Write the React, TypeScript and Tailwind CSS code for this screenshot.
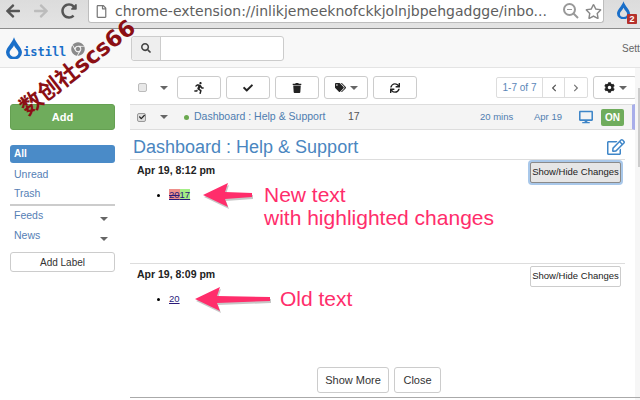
import { FaArrowLeft, FaArrowRight, FaRedoAlt, FaRegFile, FaRegStar, FaSearch, FaChrome, FaRunning, FaCheck, FaTrash, FaTags, FaSync, FaCog, FaChevronLeft, FaChevronRight, FaDesktop, FaRegEdit } from "react-icons/fa"

function Caret({ className = "" }: { className?: string }) {
  return <span className={`inline-block shrink-0 w-0 h-0 border-x-[4px] border-x-transparent border-t-[4px] border-t-[#666] ${className}`} />
}

function Drop({ size, color = "#1a6fc9" }: { size: number; color?: string }) {
  return (
    <svg width={size} height={size * 1.42} viewBox="0 0 20 28" className="shrink-0">
      <path d="M10 0 C8 7 0 13 0 19 A10 9 0 0 0 20 19 C20 13 12 7 10 0 Z M10 10 C11.5 14 15.5 16 15.5 19.5 A5.5 5 0 0 1 4.5 19.5 C4.5 16 8.5 14 10 10 Z" fill={color} fillRule="evenodd" />
    </svg>
  )
}

function ToolButton({ children }: { children: React.ReactNode }) {
  return (
    <button className="w-[44px] h-[23px] bg-white border border-[#ccc] rounded-[3px] flex items-center justify-center gap-1 text-[#222]">
      {children}
    </button>
  )
}

function Arrow({ width, className }: { width: number; className: string }) {
  return (
    <svg width={width} height="30" viewBox={`0 0 ${width} 30`} className={className}>
      <path d={`M1 13 L26 1 L23 10 L${width - 3} 11 L${width - 3} 15 L23 17 L26 25 Z`} fill="#000" opacity="0.22" transform="translate(1 2)" />
      <path d={`M1 13 L26 1 L23 10 L${width - 3} 11 L${width - 3} 15 L23 17 L26 25 Z`} fill="#ff2d6b" />
    </svg>
  )
}

function ChangesButton({ active }: { active?: boolean }) {
  return (
    <button className={active
      ? "w-[91px] h-[21px] rounded-[2px] border border-[#8a8a8a] bg-[#e6e6e6] text-[9.5px] text-[#222] whitespace-nowrap shadow-[0_0_0_2px_#a9c8ea]"
      : "w-[91px] h-[21px] rounded-[2px] border border-[#ccc] bg-white text-[9.5px] text-[#222] whitespace-nowrap"}>
      Show/Hide Changes
    </button>
  )
}

export default function App() {
  return (
    <div className="relative w-[640px] h-[400px] overflow-hidden bg-white text-[#333]" style={{ fontFamily: '"Liberation Sans", Arial, sans-serif' }}>
      {/* browser bar */}
      <div className="h-[29px] flex items-start bg-gradient-to-b from-[#dcdcdc] to-[#e4e4e4] border-b border-[#8c8c8c]">
        <div className="w-[88px] h-[22px] pl-[5px] flex items-center gap-[12px] text-[16px]">
          <FaArrowLeft className="text-[#555]" />
          <FaArrowRight className="text-[#bcbcbc]" />
          <FaRedoAlt className="text-[#555]" />
        </div>
        <div className="w-[516px] h-[23px] bg-white border border-t-0 border-[#bdbdbd] rounded-b-[3px] flex items-center">
          <FaRegFile className="ml-[6px] text-[#777] text-[13px]" />
          <span className="ml-[7px] text-[14px] text-[#5e5e5e] whitespace-nowrap" style={{ fontFamily: '"DejaVu Sans", sans-serif' }}>chrome-extension://inlikjemeeknofckkjolnjbpehgadgge/inbo...</span>
          <svg width="18" height="18" viewBox="0 0 18 18" className="ml-auto" fill="none" stroke="#999" strokeWidth="2">
            <circle cx="7.5" cy="7.5" r="5.5" />
            <path d="M11.5 11.5 L16 16" />
            <path d="M5 7.5 H10" strokeWidth="1" />
          </svg>
          <FaRegStar className="ml-[5px] mr-[1px] text-[#888] text-[17px]" />
        </div>
        <div className="relative ml-[13px] mt-[1px]">
          <Drop size={13} />
          <span className="absolute left-[10px] top-[13px] w-[10px] h-[10px] bg-[#b5312c] rounded-[1px] text-white text-[9px] font-bold leading-[10px] text-center">2</span>
        </div>
      </div>

      {/* app header */}
      <div className="h-[39px] flex items-center bg-[#f8f8f8] border-b border-[#e4e4e4]">
        <div className="w-[131px] pl-[6px] flex items-end">
          <Drop size={16} />
          <span className="ml-[1px] text-[12px] font-bold leading-[14px] text-[#1a6fc9]" style={{ fontFamily: '"DejaVu Sans Mono", monospace' }}>istill</span>
          <FaChrome className="ml-[5px] mb-[3px] text-[14px] text-[#8a8a8a]" />
        </div>
        <div className="w-[153px] h-[25px] flex bg-white border border-[#ccc] rounded-[3px]">
          <div className="w-[29px] bg-[#eee] border-r border-[#ccc] flex items-center justify-center rounded-l-[3px]">
            <FaSearch className="text-[10px] text-[#444]" />
          </div>
        </div>
        <span className="ml-auto text-[10px] text-[#666] w-[18px] overflow-hidden whitespace-nowrap">Settings</span>
      </div>

      <div className="flex h-[332px]">
        {/* sidebar */}
        <div className="w-[130px] shrink-0 pl-[10px] pr-[15px] pt-[36px]">
          <button className="w-full h-[26px] bg-[#6fac5c] border border-[#65a052] rounded-[3px] text-white text-[11px] font-bold">Add</button>
          <div className="mt-[15px] h-[18px] pl-[4px] bg-[#4a8bc8] rounded-[3px] text-white text-[10px] font-bold leading-[18px]">All</div>
          <div className="mt-[2px] pl-[4px] text-[10.5px] leading-[19px] text-[#5580b5]">Unread</div>
          <div className="pl-[4px] text-[10.5px] leading-[19px] text-[#5580b5]">Trash</div>
          <div className="mt-[1px] h-[2px] bg-[#ccc]" />
          <div className="pl-[4px] h-[20px] flex items-center justify-between pr-[7px] text-[10.5px] text-[#5580b5]">Feeds<Caret className="mt-[6px]" /></div>
          <div className="pl-[4px] h-[20px] flex items-center justify-between pr-[7px] text-[10.5px] text-[#5580b5]">News<Caret className="mt-[6px]" /></div>
          <button className="mt-[6px] w-full h-[20px] bg-white border border-[#ccc] rounded-[3px] text-[10px] text-[#333]">Add Label</button>
        </div>

        {/* main column */}
        <div className="w-[505px] shrink-0 flex flex-col">
          <div className="h-[36px] shrink-0 pt-[8px] flex items-start">
            <span className="ml-[8px] mt-[7px] w-[9px] h-[9px] shrink-0 bg-[#e8e8e8] border border-[#bbb] rounded-[2px]" />
            <Caret className="ml-[13px] mt-[10px]" />
            <div className="ml-[9px] flex gap-[5px]">
              <ToolButton><FaRunning className="text-[12px]" /></ToolButton>
              <ToolButton><FaCheck className="text-[10px]" /></ToolButton>
              <ToolButton><FaTrash className="text-[10px]" /></ToolButton>
              <ToolButton><FaTags className="text-[11px]" /><Caret /></ToolButton>
              <ToolButton><FaSync className="text-[10px]" /></ToolButton>
            </div>
            <div className="ml-[79px] flex h-[21px] mt-[1px] border border-[#ddd] rounded-[2px] text-[10px] text-[#5a86b8]">
              <div className="w-[46px] flex items-center justify-center border-r border-[#ddd]">1-7 of 7</div>
              <div className="w-[22px] flex items-center justify-center border-r border-[#ddd]"><FaChevronLeft className="text-[8px] text-[#555]" /></div>
              <div className="w-[22px] flex items-center justify-center"><FaChevronRight className="text-[8px] text-[#777]" /></div>
            </div>
            <div className="ml-[5px]"><ToolButton><FaCog className="text-[11px]" /><Caret /></ToolButton></div>
          </div>

          <div className="h-[26px] w-[505px] shrink-0 flex items-center bg-[#f4f4f4] border-t border-b border-[#ddd] text-[#4f7db0] border-r-[3px] border-r-[#a8aeea]">
            <span className="ml-[7px] w-[9px] h-[9px] shrink-0 bg-[#ddd] border border-[#999] rounded-[2px] flex items-center justify-center"><FaCheck className="text-[6px] text-[#222]" /></span>
            <Caret className="ml-[14px]" />
            <span className="ml-[16px] w-[5px] h-[5px] shrink-0 rounded-full bg-[#6aa84f]" />
            <span className="ml-[5px] w-[154px] text-[10.5px] whitespace-nowrap">Dashboard : Help &amp; Support</span>
            <span className="w-[12px] text-[10.5px] text-[#555]">17</span>
            <span className="ml-[120px] w-[54px] text-[9.5px]">20 mins</span>
            <span className="w-[45px] text-[9.5px]">Apr 19</span>
            <FaDesktop className="text-[14px] text-[#3f86c8]" />
            <span className="ml-[8px] w-[23px] h-[17px] rounded-[2px] bg-[#6fac5c] text-white text-[10px] font-bold leading-[17px] text-center">ON</span>
          </div>

          <div className="h-[30px] w-[495px] shrink-0 pl-[3px] pr-0 pt-[5px] flex items-center justify-between border-b border-[#ddd]">
            <span className="text-[18px] text-[#4a86c0]">Dashboard : Help &amp; Support</span>
            <FaRegEdit className="text-[18px] text-[#3f86c8]" />
          </div>

          {/* first change */}
          <div className="relative h-[104px] shrink-0 w-[495px] border-b border-[#ddd] pl-[7px] pr-[4px] pt-[2px]">
            <div className="flex justify-between items-start">
              <span className="mt-[1px] text-[10.5px] font-bold text-[#222]">Apr 19, 8:12 pm</span>
              <ChangesButton active />
            </div>
            <div className="absolute left-[27px] top-[28px] flex items-center text-[9.5px] text-[#2a1a7a]">
              <span className="w-[3px] h-[3px] bg-black rounded-full mr-[9px]" />
              <span className="underline">
                <span className="line-through bg-[#ee8f8a]">20</span>
                <span className="bg-[#a4ee86]">17</span>
              </span>
            </div>
            <Arrow width={53} className="absolute left-[72px] top-[22px]" />
            <div className="absolute left-[134px] top-[23px] text-[21px] leading-[23px] text-[#ff2d6b] whitespace-nowrap">New text<br />with highlighted changes</div>
          </div>

          {/* second change */}
          <div className="relative flex-1 w-[495px] pl-[7px] pr-[4px] pt-[2px]">
            <div className="flex justify-between items-start">
              <span className="mt-[1px] text-[10.5px] font-bold text-[#222]">Apr 19, 8:09 pm</span>
              <ChangesButton />
            </div>
            <div className="absolute left-[27px] top-[28px] flex items-center text-[9.5px] text-[#2a1a7a]">
              <span className="w-[3px] h-[3px] bg-black rounded-full mr-[9px]" />
              <span className="underline">20</span>
            </div>
            <Arrow width={79} className="absolute left-[64px] top-[22px]" />
            <div className="absolute left-[150px] top-[22px] text-[21px] leading-[26px] text-[#ff2d6b]">Old text</div>
            <div className="absolute left-[187px] top-[103px] flex gap-[5px]">
              <button className="w-[72px] h-[26px] bg-white border border-[#ccc] rounded-[3px] text-[11px] text-[#333]">Show More</button>
              <button className="w-[47px] h-[26px] bg-white border border-[#ccc] rounded-[3px] text-[11px] text-[#333]">Close</button>
            </div>
          </div>
        </div>

        {/* scrollbar */}
        <div className="w-[5px] bg-[#f6f6f6] flex justify-end">
          <div className="w-[2px] h-[79px] bg-[#ccc] mt-[20px]" />
        </div>
      </div>

      <div className="absolute left-[130px] right-0 top-[397px] h-px bg-[#aaa]" />

      {/* watermark */}
      <div className="absolute left-[8px] top-[56px] text-[22.5px] font-bold leading-none text-[#8b0f14] whitespace-nowrap origin-center rotate-[-38deg]" style={{ fontFamily: '"DejaVu Sans", "Noto Sans CJK SC", sans-serif' }}>数创社scs66</div>
    </div>
  )
}
